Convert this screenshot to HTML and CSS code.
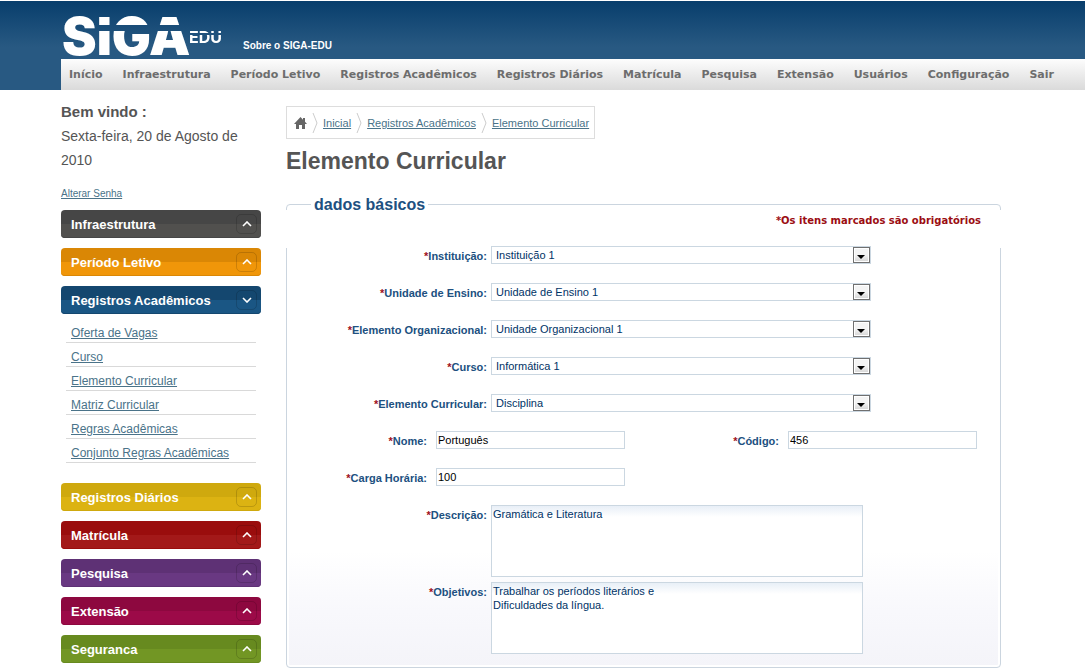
FILE: index.html
```html
<!DOCTYPE html>
<html lang="pt-BR">
<head>
<meta charset="utf-8">
<title>SIGA-EDU - Elemento Curricular</title>
<link rel="stylesheet" href="styles.css">
</head>
<body>
<header class="header">
  <div class="brand">
    <svg class="logo" width="162" height="42" viewBox="0 0 162 42" role="img" aria-label="SIGA EDU">
      <defs>
        <mask id="cut" maskUnits="userSpaceOnUse" x="0" y="-12" width="170" height="70">
          <rect y="-12" width="170" height="70" fill="#fff"/>
          <rect x="35" y="10" width="93" height="6" fill="#000"/>
          <rect x="128" y="18" width="34" height="2" fill="#000"/>
        </mask>
      </defs>
      <g mask="url(#cut)" fill="#fff">
        <text class="logo-main" x="0" y="40">SIGA</text>
        <text class="logo-sub" x="127" y="28">EDU</text>
      </g>
    </svg>
    <a class="about" href="#">Sobre o SIGA-EDU</a>
  </div>
  <nav class="nav">
    <a href="#">Início</a>
    <a href="#">Infraestrutura</a>
    <a href="#">Período Letivo</a>
    <a href="#">Registros Acadêmicos</a>
    <a href="#">Registros Diários</a>
    <a href="#">Matrícula</a>
    <a href="#">Pesquisa</a>
    <a href="#">Extensão</a>
    <a href="#">Usuários</a>
    <a href="#">Configuração</a>
    <a href="#">Sair</a>
  </nav>
</header>

<div class="page">
  <aside class="sidebar">
    <p class="welcome"><strong>Bem vindo :</strong><br>Sexta-feira, 20 de Agosto de 2010</p>
    <a class="password" href="#">Alterar Senha</a>
    <div class="menu">
      <button class="menu-head gray" type="button">Infraestrutura<span class="toggle"><svg width="10" height="6" viewBox="0 0 10 6"><path d="M1 5l4-4 4 4"/></svg></span></button>
      <button class="menu-head orange" type="button">Período Letivo<span class="toggle"><svg width="10" height="6" viewBox="0 0 10 6"><path d="M1 5l4-4 4 4"/></svg></span></button>
      <button class="menu-head blue" type="button" aria-expanded="true">Registros Acadêmicos<span class="toggle"><svg width="10" height="6" viewBox="0 0 10 6"><path d="M1 1l4 4 4-4"/></svg></span></button>
      <ul class="submenu">
        <li><a href="#">Oferta de Vagas</a></li>
        <li><a href="#">Curso</a></li>
        <li><a href="#">Elemento Curricular</a></li>
        <li><a href="#">Matriz Curricular</a></li>
        <li><a href="#">Regras Acadêmicas</a></li>
        <li><a href="#">Conjunto Regras Acadêmicas</a></li>
      </ul>
      <button class="menu-head yellow" type="button">Registros Diários<span class="toggle"><svg width="10" height="6" viewBox="0 0 10 6"><path d="M1 5l4-4 4 4"/></svg></span></button>
      <button class="menu-head red" type="button">Matrícula<span class="toggle"><svg width="10" height="6" viewBox="0 0 10 6"><path d="M1 5l4-4 4 4"/></svg></span></button>
      <button class="menu-head purple" type="button">Pesquisa<span class="toggle"><svg width="10" height="6" viewBox="0 0 10 6"><path d="M1 5l4-4 4 4"/></svg></span></button>
      <button class="menu-head magenta" type="button">Extensão<span class="toggle"><svg width="10" height="6" viewBox="0 0 10 6"><path d="M1 5l4-4 4 4"/></svg></span></button>
      <button class="menu-head green" type="button">Seguranca<span class="toggle"><svg width="10" height="6" viewBox="0 0 10 6"><path d="M1 5l4-4 4 4"/></svg></span></button>
    </div>
  </aside>

  <main class="main">
    <nav class="crumbs" aria-label="Navegação">
      <a href="#" aria-label="Home"><svg class="home" width="13" height="12" viewBox="0 0 13 12"><path d="M6.500 0L0 7h2v5h3V8h3v4h3V7h2l-2-2.200V1H9v1.700z"/></svg></a>
      <svg class="sep" width="6" height="20" viewBox="0 0 6 20"><path d="M1 0l4 10-4 10"/></svg>
      <a href="#">Inicial</a>
      <svg class="sep" width="6" height="20" viewBox="0 0 6 20"><path d="M1 0l4 10-4 10"/></svg>
      <a href="#">Registros Acadêmicos</a>
      <svg class="sep" width="6" height="20" viewBox="0 0 6 20"><path d="M1 0l4 10-4 10"/></svg>
      <a href="#">Elemento Curricular</a>
    </nav>
    <h1 class="title">Elemento Curricular</h1>
    <form>
      <fieldset class="panel">
        <legend>dados básicos</legend>
        <p class="note">*Os itens marcados são obrigatórios</p>
        <div class="fields">
          <div class="row">
            <label for="inst"><span class="req">*</span>Instituição:</label>
            <span class="select"><select id="inst"><option>Instituição 1</option></select></span>
          </div>
          <div class="row">
            <label for="unid"><span class="req">*</span>Unidade de Ensino:</label>
            <span class="select"><select id="unid"><option>Unidade de Ensino 1</option></select></span>
          </div>
          <div class="row">
            <label for="org"><span class="req">*</span>Elemento Organizacional:</label>
            <span class="select"><select id="org"><option>Unidade Organizacional 1</option></select></span>
          </div>
          <div class="row">
            <label for="curso"><span class="req">*</span>Curso:</label>
            <span class="select"><select id="curso"><option>Informática 1</option></select></span>
          </div>
          <div class="row">
            <label for="elem"><span class="req">*</span>Elemento Curricular:</label>
            <span class="select"><select id="elem"><option>Disciplina</option></select></span>
          </div>
          <div class="row short">
            <label for="nome"><span class="req">*</span>Nome:</label>
            <input id="nome" type="text" value="Português">
            <label class="second" for="codigo"><span class="req">*</span>Código:</label>
            <input id="codigo" type="text" value="456">
          </div>
          <div class="row short">
            <label for="carga"><span class="req">*</span>Carga Horária:</label>
            <input id="carga" type="text" value="100">
          </div>
          <div class="row area">
            <label for="desc"><span class="req">*</span>Descrição:</label>
            <textarea id="desc">Gramática e Literatura</textarea>
          </div>
          <div class="row area">
            <label for="obj"><span class="req">*</span>Objetivos:</label>
            <textarea id="obj">Trabalhar os períodos literários e
Dificuldades da língua.</textarea>
          </div>
        </div>
      </fieldset>
    </form>
  </main>
</div>
</body>
</html>
```
FILE: styles.css
```css
*,
*::before {
  box-sizing: border-box;
}

body {
  margin: 0;
  background: #fff;
  color: #555;
  font-family: "Liberation Sans", Arial, sans-serif;
  font-size: 12px;
}

a {
  color: #4a7389;
}

.header {
  padding-left: 61px;
  border-top: 1px solid #fff;
  background: linear-gradient(#083e6c, #285982 46px);
}

.brand {
  display: flex;
  align-items: flex-end;
  gap: 19px;
  height: 58px;
  padding: 0 0 2px 1px;
}

.logo {
  flex: none;
  overflow: visible;
}

.logo-main {
  font: 900 52px Inter, sans-serif;
}

.logo-sub {
  font: 700 16px Inter, sans-serif;
}

.about {
  padding-bottom: 5px;
  color: #fff;
  font-size: 10px;
  font-weight: bold;
  line-height: 12px;
  text-decoration: none;
}

.nav {
  display: flex;
  gap: 20px;
  height: 31px;
  padding-left: 8px;
  background: linear-gradient(#fdfdfd, #dadada);
  font: bold 11px/32px "DejaVu Sans", Verdana, sans-serif;
  white-space: nowrap;
}

.nav a {
  color: #6d6d6d;
  text-decoration: none;
}

.page {
  display: grid;
  grid-template-columns: 200px minmax(0, 1fr);
  gap: 25px;
  padding: 0 84px 4px 61px;
}

.sidebar {
  padding-top: 10px;
}

.welcome {
  margin: 0;
  font-size: 14px;
  line-height: 24px;
}

.welcome strong {
  font-size: 15px;
}

.password {
  display: block;
  margin: 16px 0 10px;
  font-size: 10px;
  line-height: 12px;
}

.menu {
  display: flex;
  flex-direction: column;
  gap: 10px;
}

.menu-head {
  display: flex;
  align-items: center;
  justify-content: space-between;
  height: 28px;
  padding: 0 4px 0 10px;
  border: 0;
  border-radius: 4px;
  background: linear-gradient(var(--top) 50%, var(--low) 50%);
  box-shadow: inset 0 -1px 0 var(--top);
  color: #fff;
  font: bold 13px "Liberation Sans", Arial, sans-serif;
  text-align: left;
}

.toggle {
  display: flex;
  align-items: center;
  justify-content: center;
  width: 21px;
  height: 20px;
  border: 1px solid rgba(0, 0, 0, 0.15);
  border-radius: 5px;
}

.toggle path {
  fill: none;
  stroke: #fff;
  stroke-width: 1.600;
}

.gray { --top: #464646; --low: #51504e; }
.orange { --top: #da8705; --low: #f09609; }
.blue { --top: #14476f; --low: #1a5684; }
.yellow { --top: #cfa90e; --low: #dcb312; }
.red { --top: #9a0d0d; --low: #a31919; }
.purple { --top: #5e3175; --low: #693882; }
.magenta { --top: #8d083f; --low: #9c0a48; }
.green { --top: #678a1f; --low: #729624; }

.submenu {
  margin: -5px 5px 10px;
  padding: 0;
  list-style: none;
}

.submenu li {
  height: 24px;
  padding-left: 5px;
  border-bottom: 1px solid #d9d9d9;
  line-height: 28px;
}

.main {
  padding-top: 16px;
}

.crumbs {
  display: inline-flex;
  align-items: center;
  gap: 5px;
  height: 33px;
  padding: 0 5px 0 7px;
  border: 1px solid #ddd;
  font-size: 11px;
}

.home {
  display: block;
  fill: #666;
}

.sep path {
  fill: none;
  stroke: #ccc;
}

.title {
  margin: 8px 0 21px;
  font-size: 23px;
  line-height: 28px;
}

.panel {
  min-width: 0;
  margin: 0;
  padding: 0 0 13px;
  border: 1px solid #cbd5df;
  border-radius: 4px;
  background: linear-gradient(#fff 75%, #f8f8fc 88%, #f4f4f9);
  box-shadow: inset 0 0 0 2px #fff;
}

.panel legend {
  margin-left: 24px;
  padding: 2px 3px 0;
  color: #205080;
  font-size: 16px;
  font-weight: bold;
  line-height: 14px;
}

.note {
  height: 38px;
  margin: -2px -1px 0;
  padding-right: 20px;
  background: #fff;
  color: #9b0d12;
  font: bold 10px/22px "DejaVu Sans", Verdana, sans-serif;
  text-align: right;
}

.fields {
  margin-top: -2px;
}

.row {
  display: flex;
  gap: 4px;
  height: 37px;
  color: #205080;
  font-size: 11px;
}

.row label {
  flex: none;
  width: 200px;
  font-weight: bold;
  line-height: 20px;
  text-align: right;
}

.req {
  color: #a0101c;
}

.select {
  position: relative;
  flex: 0 1 380px;
  height: 18px;
}

.select select {
  display: block;
  width: 100%;
  height: 18px;
  padding: 0 20px 0 4px;
  border: 1px solid #cbd7e1;
  border-radius: 0;
  appearance: none;
  background: #fff;
  color: #003366;
  font: 11px "Liberation Sans", Arial, sans-serif;
}

.select::before {
  content: "";
  position: absolute;
  top: 1px;
  right: 1px;
  width: 17px;
  height: 16px;
  border: 1px solid #707070;
  background: linear-gradient(#f4f4f4 50%, #d4d4d4);
  box-shadow: inset 0 0 0 1px #fff;
  pointer-events: none;
}

.select::after {
  content: "";
  position: absolute;
  top: 9px;
  right: 6px;
  border: 4px solid transparent;
  border-top-color: #000;
  border-bottom: 0;
  pointer-events: none;
}

.row input,
.row textarea {
  margin: 0;
  border: 1px solid #cbd7e1;
  border-radius: 0;
  background: #fff;
  font: 11px "Liberation Sans", Arial, sans-serif;
}

.row input {
  flex: 0 1 189px;
  min-width: 0;
  height: 18px;
  padding: 0 1px;
  color: #000;
}

.short {
  gap: 9px;
}

.short label {
  width: 140px;
}

.short .second {
  width: 145px;
}

.area {
  height: 77px;
}

.area:last-child {
  height: 72px;
}

.row textarea {
  flex: 0 1 372px;
  height: 72px;
  padding: 1px;
  resize: none;
  background: linear-gradient(#e8eff7, #fff 11px);
  color: #003366;
  line-height: 14px;
}
```
